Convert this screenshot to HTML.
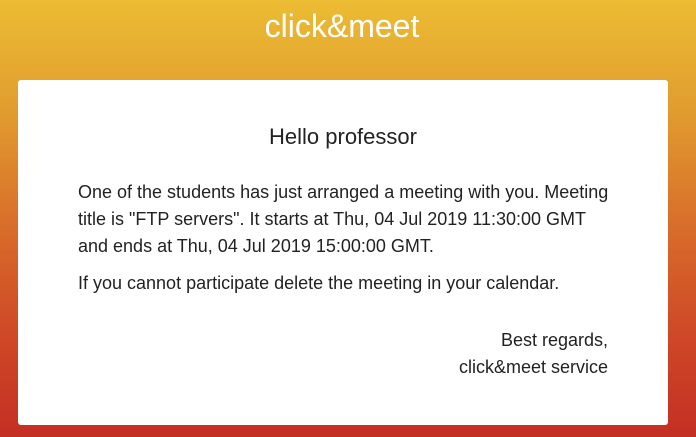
<!DOCTYPE html>
<html><head><style>
html,body{margin:0;padding:0;}
body{width:696px;height:437px;overflow:hidden;background:linear-gradient(#ecbc33 0%,#e19d2f 25%,#d9702b 50%,#cf4a27 75%,#c42f24 100%);font-family:"Liberation Sans",sans-serif;position:relative;}
h1{position:absolute;top:6px;left:-6px;width:696px;text-align:center;margin:0;font-weight:normal;color:#fff;font-size:32px;line-height:40px;}
.card{position:absolute;left:18px;top:80px;width:650px;height:345px;background:#fff;border-radius:3px;}
.t{position:absolute;top:43px;left:0;width:100%;text-align:center;font-size:22px;color:#222;line-height:28px;}
.p{position:absolute;left:60px;width:560px;font-size:18px;line-height:27px;color:#222;white-space:nowrap;}
.r{text-align:right;width:530px;}
</style></head><body>
<h1>click&amp;meet</h1>
<div class="card">
<div class="t">Hello professor</div>
<div class="p" style="top:99px">One of the students has just arranged a meeting with you. Meeting<br>title is "FTP servers". It starts at Thu, 04 Jul 2019 11:30:00 GMT<br>and ends at Thu, 04 Jul 2019 15:00:00 GMT.</div>
<div class="p" style="top:190px">If you cannot participate delete the meeting in your calendar.</div>
<div class="p r" style="top:247px">Best regards,<br>click&amp;meet service</div>
</div>
</body></html>
